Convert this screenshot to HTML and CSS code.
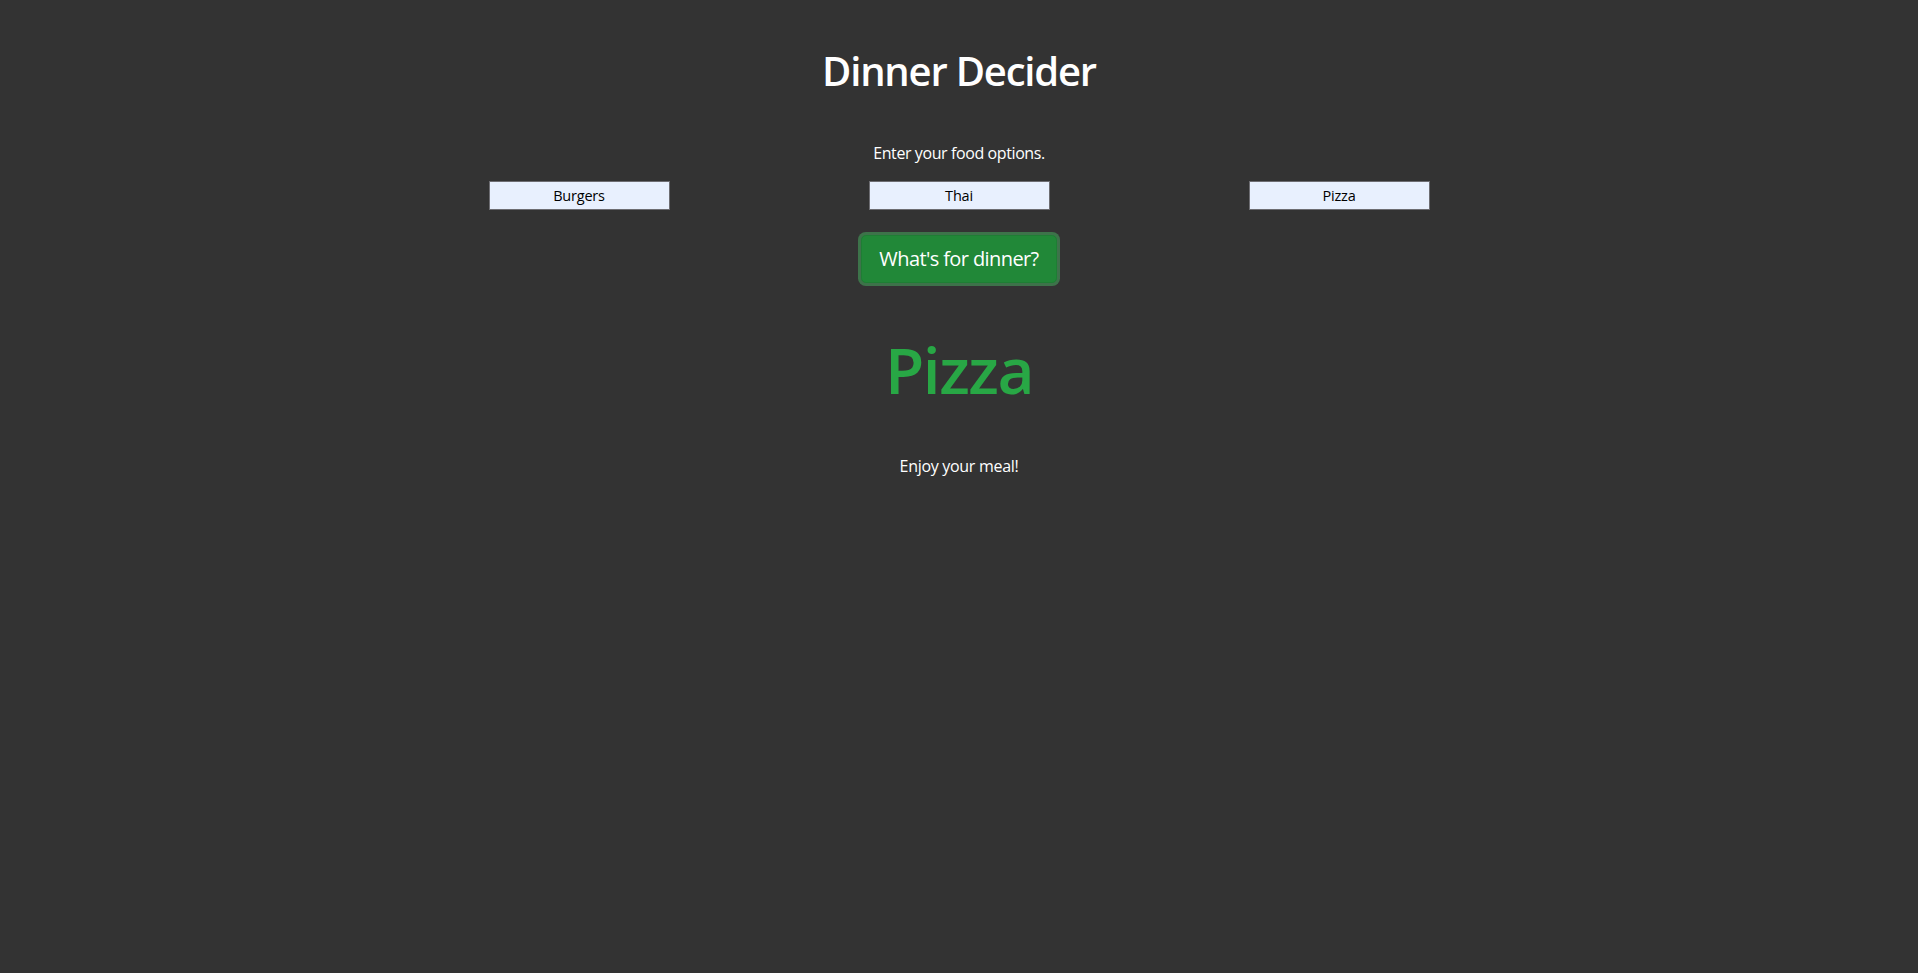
FILE: index.html
```html
<!DOCTYPE html>
<html lang="en">
<head>
<meta charset="utf-8">
<title>Dinner Decider</title>
<link rel="stylesheet" href="styles.css">
</head>
<body>
<main class="app">
  <h1 class="title">Dinner Decider</h1>
  <p class="prompt">Enter your food options.</p>
  <div class="options">
    <div class="option"><input class="food-input" type="text" value="Burgers"></div>
    <div class="option"><input class="food-input" type="text" value="Thai"></div>
    <div class="option"><input class="food-input" type="text" value="Pizza"></div>
  </div>
  <button class="decide-btn" type="button">What's for dinner?</button>
  <h1 class="result">Pizza</h1>
  <p class="enjoy">Enjoy your meal!</p>
</main>
</body>
</html>
```

FILE: styles.css
```css
html, body {
  margin: 0;
  height: 100%;
}
body {
  background: #333333;
  color: #ffffff;
  font-family: "Open Sans", "Noto Sans", sans-serif;
}
.app {
  width: 1140px;
  margin: 0 auto;
  padding-top: 47px;
  display: flex;
  flex-direction: column;
  align-items: center;
  text-align: center;
}
.title {
  margin: 0;
  font-size: 40px;
  line-height: 48px;
  font-weight: 600;
  letter-spacing: -1.2px;
}
.prompt {
  margin: 46px 0 0;
  font-size: 16px;
  line-height: 24px;
  letter-spacing: -0.4px;
}
.options {
  margin-top: 16px;
  width: 100%;
  display: grid;
  grid-template-columns: repeat(3, 1fr);
}
.option {
  padding: 0 15px;
  display: flex;
  justify-content: center;
}
.food-input {
  box-sizing: border-box;
  width: 181px;
  height: 29px;
  margin: 0;
  padding: 0 4px;
  background: #e8f0fe;
  border: 1px solid #6d6d72;
  color: #000000;
  font-family: "Open Sans", "Noto Sans", sans-serif;
  font-size: 14.5px;
  letter-spacing: -0.2px;
  text-align: center;
}
.decide-btn {
  margin-top: 25px;
  box-sizing: border-box;
  height: 48px;
  padding: 0 17px;
  background: #218838;
  border: 1px solid #1e7e34;
  border-radius: 4.8px;
  box-shadow: 0 0 0 3px rgba(72, 180, 97, 0.5);
  color: #ffffff;
  font-family: "Open Sans", "Noto Sans", sans-serif;
  font-size: 20px;
  line-height: 30px;
  letter-spacing: -0.6px;
  cursor: pointer;
}
.result {
  margin: 48px 0 0;
  font-size: 64px;
  line-height: 77px;
  font-weight: 600;
  letter-spacing: -1.5px;
  color: #28a745;
}
.enjoy {
  margin: 46px 0 0;
  font-size: 16px;
  line-height: 24px;
  letter-spacing: -0.3px;
}
```
